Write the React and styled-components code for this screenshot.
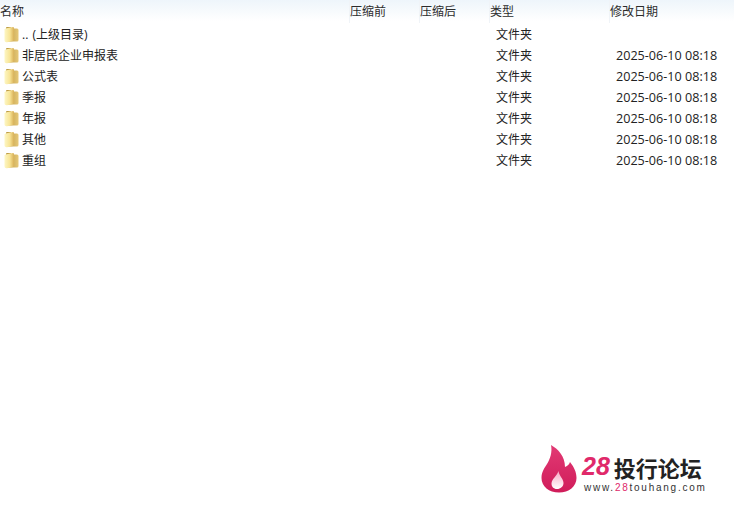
import React from 'react';
import styled, { createGlobalStyle } from 'styled-components';

const GlobalStyle = createGlobalStyle`
  html, body {
    margin: 0;
    padding: 0;
    background: #fff;
  }
  body {
    font-family: "Open Sans", "Noto Sans CJK SC", sans-serif;
    font-size: 12px;
    color: #222;
  }
`;

const Page = styled.div`
  position: relative;
  width: 734px;
  height: 518px;
  overflow: hidden;
  background: #fff;
`;

const HeaderRow = styled.div`
  display: grid;
  grid-template-columns: 350px 70px 70px 120px 124px;
  height: 21px;
  background: linear-gradient(#eef5fb, #f8fbfd 60%, #ffffff);
`;

const HeaderCell = styled.div`
  line-height: 23px;
  border-left: 1px solid ${p => (p.$first ? 'transparent' : '#f0f4f8')};
  margin-left: -1px;
  color: #2c2c2c;
`;

const List = styled.div`
  padding-top: 3px;
`;

const Row = styled.div`
  display: grid;
  grid-template-columns: 490px 120px 124px;
  height: 21px;
  line-height: 21px;
`;

const NameCell = styled.div`
  display: flex;
  align-items: center;
  gap: 3px;
  padding-left: 4px;
  word-spacing: 1px;
`;

const Cell = styled.div`
  padding-left: 6px;
`;

const DateCell = styled(Cell)`
  font-size: 12.6px;
`;

const Logo = styled.div`
  position: absolute;
  left: 541px;
  top: 445px;
  display: flex;
  gap: 5px;
`;

const LogoText = styled.div`
  display: flex;
  flex-direction: column;
  padding-top: 7px;
`;

const LogoTitle = styled.div`
  display: flex;
  align-items: center;
  height: 29px;
  gap: 4px;
`;

const LogoNumber = styled.span`
  font-family: "Liberation Sans", sans-serif;
  font-style: italic;
  font-weight: 700;
  font-size: 25px;
  color: #e0296a;
`;

const LogoName = styled.span`
  font-family: "Noto Sans CJK SC", sans-serif;
  font-weight: 700;
  font-size: 22px;
  color: #222;
`;

const LogoUrl = styled.div`
  font-family: "Liberation Sans", sans-serif;
  font-size: 10px;
  letter-spacing: 1.75px;
  line-height: 13px;
  margin-left: 2px;
  white-space: nowrap;
  color: #333;
  span {
    color: #e0296a;
  }
`;

const FolderIcon = () => (
  <svg width="15" height="17" viewBox="0 0 15 17">
    <defs>
      <linearGradient id="folderBack" x1="0" y1="0" x2="1" y2="0">
        <stop offset="0" stopColor="#b8963e" />
        <stop offset="1" stopColor="#e6c878" />
      </linearGradient>
      <linearGradient id="folderFront" x1="0" y1="0" x2="1" y2="0">
        <stop offset="0" stopColor="#fdf6c4" />
        <stop offset="0.55" stopColor="#f8e596" />
        <stop offset="1" stopColor="#d8b058" />
      </linearGradient>
    </defs>
    <path d="M2 2 Q2 1 3 1 H6.5 L8 2.500 H13 Q14.500 2.500 14.500 4 V14 Q14.500 15.500 13 15.500 H3 Z" fill="url(#folderBack)" />
    <path d="M0.500 3.500 Q0.500 2.600 1.500 2.400 L9 1 Q10 1 10 2 V13.500 Q10 14.600 9 15 L3 16.200 Q0.500 16.500 0.500 14.500 Z" fill="url(#folderFront)" />
  </svg>
);

const FlameLogo = () => (
  <svg width="36" height="48" viewBox="0 0 36 48">
    <defs>
      <linearGradient id="flame" x1="0" y1="0" x2="0" y2="1">
        <stop offset="0" stopColor="#e23a74" />
        <stop offset="1" stopColor="#d01c5a" />
      </linearGradient>
      <linearGradient id="drop" x1="0" y1="0" x2="0" y2="1">
        <stop offset="0" stopColor="#f8a8c4" />
        <stop offset="1" stopColor="#ffffff" />
      </linearGradient>
    </defs>
    <path
      fill="url(#flame)"
      d="M10 0 C17 4 24 11 24 22 C26 21 28 20 29 17 C33 22 35.500 27 35.500 33 C35.500 41.500 28 47.500 18 47.500 C8 47.500 0.500 41.500 0.500 33 C0.500 27 3.500 23 6 19 C9 14.500 11.500 7 10 0 Z"
    />
    <path
      fill="url(#drop)"
      d="M17.500 26 C18 31 22.500 33.500 22.500 38 C22.500 41.500 19.500 44 16 44 C12.500 44 10.500 41.500 10.500 38.500 C10.500 34 15.500 31.500 17.500 26 Z"
    />
  </svg>
);

const columns = ['压缩前', '压缩后', '类型', '修改日期'];

const DATE = '2025-06-10 08:18';

const files = [
  { name: '.. (上级目录)', date: '' },
  { name: '非居民企业申报表', date: DATE },
  { name: '公式表', date: DATE },
  { name: '季报', date: DATE },
  { name: '年报', date: DATE },
  { name: '其他', date: DATE },
  { name: '重组', date: DATE },
];

const App = () => (
  <Page>
    <GlobalStyle />
    <HeaderRow>
      <HeaderCell $first>名称</HeaderCell>
      {columns.map(c => (
        <HeaderCell key={c}>{c}</HeaderCell>
      ))}
    </HeaderRow>
    <List>
      {files.map(f => (
        <Row key={f.name}>
          <NameCell>
            <FolderIcon />
            {f.name}
          </NameCell>
          <Cell>文件夹</Cell>
          <DateCell>{f.date}</DateCell>
        </Row>
      ))}
    </List>
    <Logo>
      <FlameLogo />
      <LogoText>
        <LogoTitle>
          <LogoNumber>28</LogoNumber>
          <LogoName>投行论坛</LogoName>
        </LogoTitle>
        <LogoUrl>
          www.<span>28</span>touhang.com
        </LogoUrl>
      </LogoText>
    </Logo>
  </Page>
);

export default App;
